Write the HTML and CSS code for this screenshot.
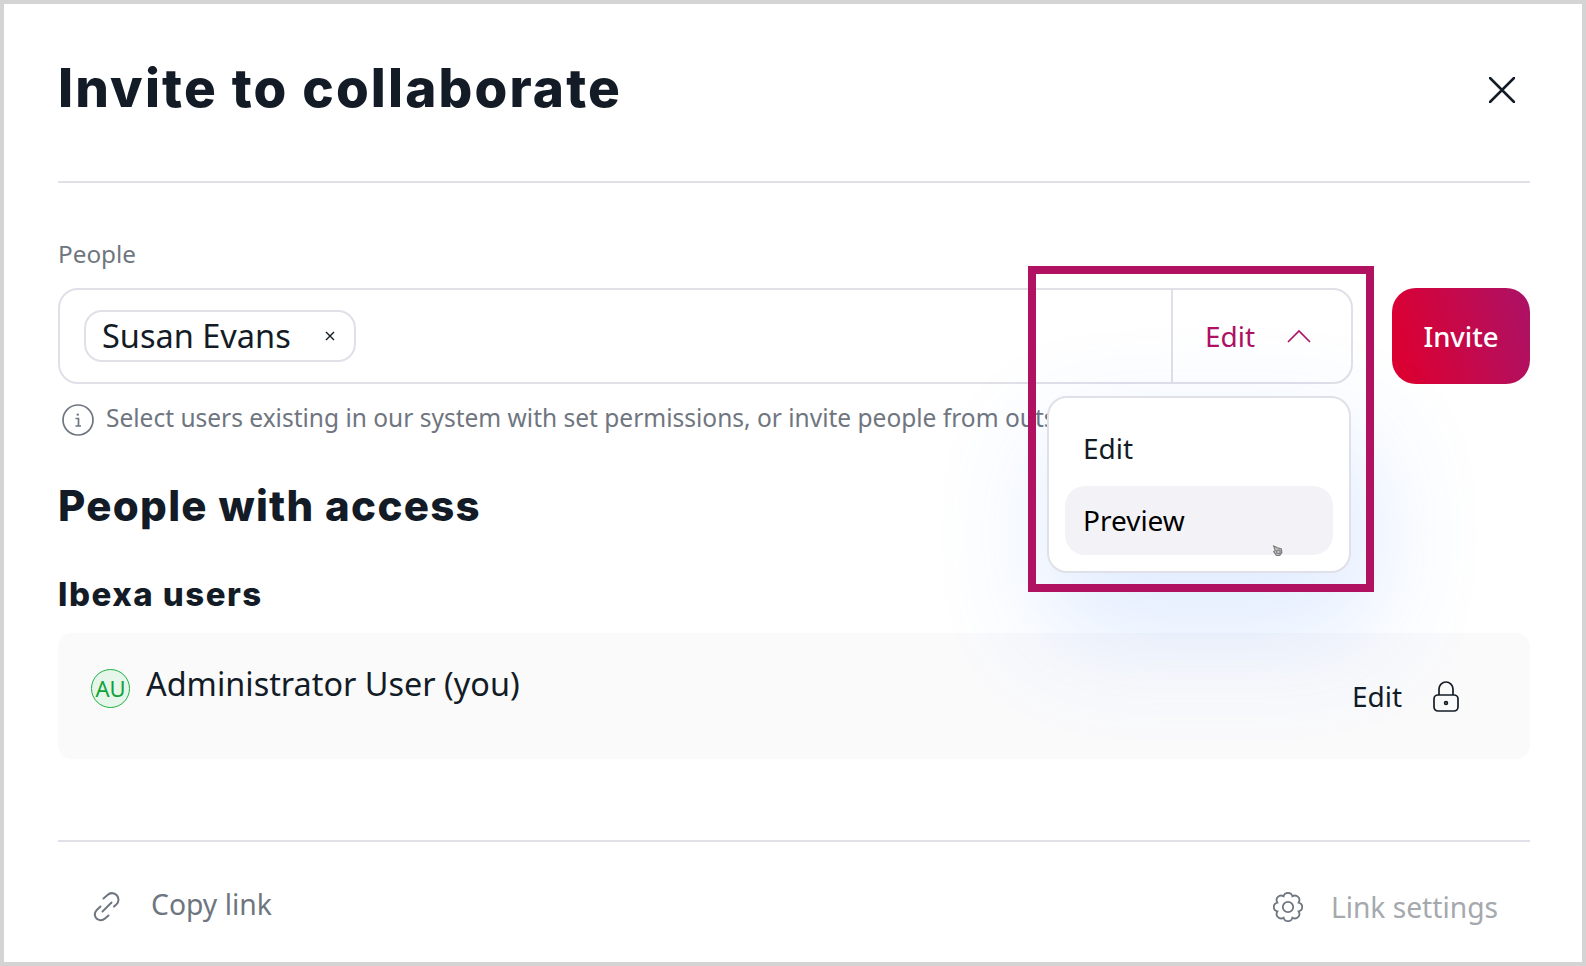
FILE: index.html
```html
<!DOCTYPE html>
<html lang="en">
<head>
<meta charset="utf-8">
<title>Invite to collaborate</title>
<link rel="stylesheet" href="styles.css">
</head>
<body>
<div class="modal">
  <header class="modal-head">
    <h1 class="title">Invite to collaborate</h1>
    <svg class="close" viewBox="0 0 26 26"><path d="M1 1 25 25M25 1 1 25"/></svg>
  </header>

  <div class="label">People</div>
  <div class="invite-row">
    <div class="people-input">
      <div class="chip"><span class="chip-name">Susan Evans</span><svg class="chip-x" viewBox="0 0 10 10"><path d="M1 1 9 9M9 1 1 9"/></svg></div>
      <div class="perm"><span class="perm-text">Edit</span><svg class="chev" viewBox="0 0 24 14"><path d="M1 13 12 2 23 13"/></svg></div>
    </div>
    <button class="invite-btn">Invite</button>
  </div>
  <div class="hint">
    <svg class="info" viewBox="0 0 32 32"><circle cx="16" cy="16" r="15"/><path d="M13.5 14.5h3v7.5M13.5 22h5.5"/><circle class="info-dot" cx="15.8" cy="10.6" r="1.2"/></svg>
    <span>Select users existing in our system with set permissions, or invite people from outside.</span>
  </div>

  <h2 class="h-access">People with access</h2>
  <h3 class="h-group">Ibexa users</h3>
  <div class="user-row">
    <div class="avatar">AU</div>
    <div class="user-name">Administrator User (you)</div>
    <div class="user-perm">Edit</div>
    <svg class="lock" viewBox="0 0 26 31"><path d="M6 14V8a7 7 0 0 1 14 0v6"/><rect x="1" y="14" width="24" height="16" rx="4"/><circle cx="13" cy="22" r="1.4"/></svg>
  </div>

  <footer class="modal-foot">
    <div class="copy">
      <svg class="link-ico" viewBox="0 0 30 30"><path d="M11.5 6.5 15.5 3a6.4 6.4 0 0 1 10.8 3.6c.6 2.6-.3 4.4-2 6l-2.3 2"/><path d="M8.5 14.5 4.5 18.300a6.300 6.300 0 0 0-.7 7.300c2.300 3.400 6.500 3.500 9.200 1l3.500-3.100"/><path d="M10.500 19.500 19.500 10.500"/></svg>
      <span>Copy link</span>
    </div>
    <div class="settings">
      <svg class="gear" viewBox="0 0 32 32"><path d="M11.600 5.370A4.500 4.500 0 0 1 20.400 5.370 4.500 4.500 0 0 1 26.630 11.600 4.500 4.500 0 0 1 26.630 20.400 4.500 4.500 0 0 1 20.400 26.630 4.500 4.500 0 0 1 11.600 26.630 4.500 4.500 0 0 1 5.370 20.400 4.500 4.500 0 0 1 5.370 11.600 4.500 4.500 0 0 1 11.600 5.370Z"/><circle cx="16" cy="16" r="5.200"/></svg>
      <span>Link settings</span>
    </div>
  </footer>

  <div class="menu">
    <div class="menu-item">Edit</div>
    <div class="menu-item is-hover">Preview</div>
    <svg class="cursor" viewBox="0 0 10 10"><path d="M1.500 1 5 2.500 8.500 3.500 9 7 7 9.500H4L1.500 6 3 5Z"/><circle cx="5.800" cy="6.300" r="1.700"/></svg>
  </div>
  <div class="focus-box"></div>
</div>
</body>
</html>
```
FILE: styles.css
```css
* { box-sizing: border-box; }
html, body { margin: 0; padding: 0; }
body { width: 1586px; height: 966px; overflow: hidden; background: #fff; font-family: "Noto Sans", sans-serif; color: #131c26; }

.modal { position: relative; width: 1586px; height: 966px; border: 4px solid #d4d4d4; padding: 0 52px 0 54px; display: flex; flex-direction: column; background: #fff; overflow: hidden; }

.modal-head { height: 179px; padding-top: 54px; border-bottom: 2px solid #e0e0e8; display: flex; justify-content: space-between; align-items: flex-start; }
.title { margin: 0; font-family: Inter, sans-serif; font-weight: 800; font-size: 53px; line-height: 60px; letter-spacing: 2.150px; }
.close { width: 26px; height: 26px; margin: 19px 15px 0 0; fill: none; stroke: #131c26; stroke-width: 2.5; stroke-linecap: round; }

.label { margin-top: 55px; font-size: 24.300px; line-height: 32px; color: #6f7680; }

.invite-row { margin-top: 18px; display: flex; gap: 39px; }
.people-input { flex: 1; height: 96px; border: 2px solid #e0e0e8; border-radius: 20px; padding-left: 24px; display: flex; align-items: center; justify-content: space-between; }
.chip { width: 272px; height: 52px; border: 2px solid #e0e0e8; border-radius: 18px; padding-left: 16px; display: flex; align-items: center; }
.chip-name { font-size: 32.500px; line-height: 44px; }
.chip-x { width: 10px; height: 10px; margin-left: 34px; fill: none; stroke: #131c26; stroke-width: 1.400; }
.perm { width: 180px; height: 100%; border-left: 2px solid #e0e0e8; padding-left: 32px; display: flex; align-items: center; color: #ae1164; }
.perm-text { font-size: 28px; line-height: 40px; }
.chev { width: 24px; height: 14px; margin-left: 32px; fill: none; stroke: #ae1164; stroke-width: 1.600; }
.invite-btn { width: 138px; height: 96px; border: 0; border-radius: 24px; background: linear-gradient(75deg, #db0032 10%, #ae1164 95%); color: #fff; font: 500 27.500px/40px "Noto Sans", sans-serif; padding: 1px 0 0; }

.hint { margin-top: 18px; height: 32px; padding-left: 4px; display: flex; align-items: flex-start; gap: 12px; font-size: 24.500px; line-height: 32px; color: #6f7680; white-space: nowrap; }
.info { width: 32px; height: 32px; margin-top: 2px; flex: none; fill: none; stroke: #6f7680; stroke-width: 1.700; }
.info-dot { fill: #6f7680; stroke: none; }

.h-access { margin: 47px 0 0; font-family: Inter, sans-serif; font-weight: 800; font-size: 42px; line-height: 50px; letter-spacing: 1.300px; }
.h-group { margin: 43px 0 0; font-family: Inter, sans-serif; font-weight: 800; font-size: 33px; line-height: 40px; letter-spacing: 1.500px; }

.user-row { margin-top: 19px; height: 126px; border-radius: 14px; background: #fafafb; padding: 36px 71px 0 33px; display: flex; align-items: flex-start; }
.avatar { width: 39px; height: 39px; border: 1.500px solid #1fb141; border-radius: 50%; background: #e6f6ea; color: #0fa336; font-size: 22px; line-height: 36px; text-align: center; flex: none; }
.user-name { margin: -8px 0 0 16px; font-size: 32.400px; line-height: 44px; flex: 1; }
.user-perm { margin-top: 7px; font-size: 28px; line-height: 40px; }
.lock { width: 26px; height: 31px; margin: 12px 0 0 31px; fill: none; stroke: #131c26; stroke-width: 1.700; }

.modal-foot { margin-top: 81px; border-top: 2px solid #e0e0e8; padding: 48px 32px 0 34px; display: flex; justify-content: space-between; align-items: flex-start; font-size: 28.300px; line-height: 40px; }
.copy { display: flex; align-items: center; gap: 29px; color: #6f7680; margin-top: -6px; }
.link-ico { width: 30px; height: 30px; margin-top: 6px; fill: none; stroke: #6f7680; stroke-width: 2; stroke-linecap: round; }
.settings { display: flex; align-items: center; gap: 27px; color: #a5a9ae; margin-top: -3px; font-size: 28.200px; }
.gear { width: 32px; height: 32px; fill: none; stroke: #6f7680; stroke-width: 1.800; }

.menu { position: absolute; left: 1043px; top: 392px; width: 304px; height: 177px; padding: 16px 16px; background: #fff; border: 2px solid #e0e0e8; border-radius: 20px; box-shadow: 10px 50px 110px 15px rgba(71, 136, 255, .16); display: flex; flex-direction: column; gap: 3px; }
.menu-item { height: 69px; border-radius: 20px; padding-left: 18px; font-size: 28px; line-height: 68px; }
.is-hover { background: #f3f3f7; color: #000; }
.cursor { position: absolute; left: 223px; top: 147px; width: 11px; height: 11px; fill: #c4c4c4; stroke: #777; stroke-width: 1; }

.focus-box { position: absolute; left: 1024px; top: 262px; width: 346px; height: 326px; border: 8px solid #b01161; pointer-events: none; }
```
